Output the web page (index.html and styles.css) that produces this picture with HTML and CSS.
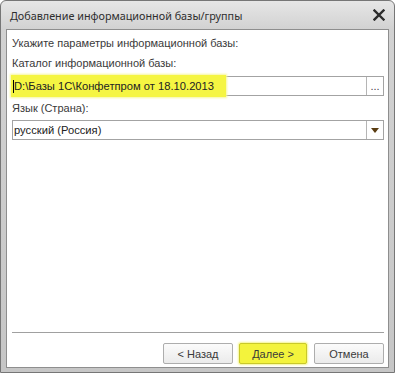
FILE: index.html
```html
<!DOCTYPE html>
<html>
<head>
<meta charset="utf-8">
<link rel="stylesheet" href="styles.css">
<title>Добавление информационной базы/группы</title>
</head>
<body>
  <div class="okno">
    <div class="zagolovok">
      <span class="zagolovok-text">Добавление информационной базы/группы</span>
      <span class="zakryt">
        <svg width="12" height="12" viewBox="0 0 12 12">
          <path d="M1.5 1.5 L10.5 10.5 M10.5 1.5 L1.5 10.5" stroke="#2b2b2b" stroke-width="2.4" stroke-linecap="square"/>
        </svg>
      </span>
    </div>
    <div class="klient">
      <div class="stroka">Укажите параметры информационной базы:</div>
      <div class="stroka metka">Каталог информационной базы:</div>
      <div class="pole">
        <div class="pole-text">
          <span class="podsvetka"><span class="kursor"></span>D:\Базы 1С\Конфетпром от 18.10.2013</span>
        </div>
        <div class="pole-knopka">...</div>
      </div>
      <div class="stroka metka-2">Язык (Страна):</div>
      <div class="pole pole-spisok">
        <div class="pole-text">русский (Россия)</div>
        <div class="pole-knopka">
          <svg width="8" height="5" viewBox="0 0 8 5"><path d="M0 0 L8 0 L4 5 Z" fill="#5a3d12"/></svg>
        </div>
      </div>
      <div class="razdelitel"></div>
      <div class="knopki">
        <button class="knopka">&lt; Назад</button>
        <button class="knopka knopka-dalee">Далее &gt;</button>
        <button class="knopka">Отмена</button>
      </div>
    </div>
  </div>
</body>
</html>
```

FILE: styles.css
```css
body {
  margin: 0;
  background-color: #ffffff;
  font-family: "Liberation Sans", Arial, sans-serif;
}

.okno {
  width: 395px;
  height: 373px;
  box-sizing: border-box;
  border: 1px solid #767676;
  border-radius: 6px 6px 0 0;
  background: linear-gradient(to bottom, #e6e6e6 0px, #d2d2d2 28px, #c6c6c6 100%);
  display: flex;
  flex-direction: column;
}

.zagolovok {
  height: 28px;
  display: flex;
  align-items: center;
  padding: 0 9px 0 9px;
}

.zagolovok-text {
  flex: 1;
  font-family: "Noto Sans", sans-serif;
  font-size: 10.8px;
  color: #2e2e2e;
}

.zakryt {
  display: flex;
}

.klient {
  flex: 1;
  margin: 0 5px 4px 5px;
  border: 1px solid #8e8e8e;
  background-color: #ffffff;
  padding: 6px 4px 0 5px;
  display: flex;
  flex-direction: column;
  font-size: 11px;
  color: #3a3a3a;
}

.stroka {
  line-height: 14px;
}

.metka {
  margin-top: 6px;
}

.metka-2 {
  margin-top: 5px;
}

.pole {
  margin-top: 6px;
  height: 20px;
  box-sizing: border-box;
  border: 1px solid #a3a3a3;
  display: flex;
}

.pole-spisok {
  margin-top: 5px;
}

.pole-text {
  flex: 1;
  display: flex;
  align-items: center;
  padding-left: 1px;
  font-size: 11.2px;
  color: #222222;
}

.podsvetka {
  display: flex;
  align-items: center;
  height: 22px;
  margin-left: -3px;
  padding: 0 12px 0 2px;
  background-color: #f5f542;
  box-shadow: 0 0 2px 1px #f7f79a;
}

.kursor {
  width: 1px;
  height: 13px;
  background-color: #000000;
}

.pole-knopka {
  width: 16px;
  border-left: 1px solid #b5b5b5;
  display: flex;
  align-items: center;
  justify-content: center;
  font-size: 11px;
  color: #444444;
  background-color: #ffffff;
}

.razdelitel {
  margin-top: auto;
  height: 1px;
  background-color: #a0a0a0;
}

.knopki {
  display: flex;
  justify-content: flex-end;
  margin-top: 10px;
  margin-bottom: 3px;
}

.knopka {
  width: 70px;
  height: 21px;
  border: 1px solid #adadad;
  border-radius: 2px;
  background: linear-gradient(to bottom, #fbfbfb, #ebebeb);
  font-family: "Liberation Sans", Arial, sans-serif;
  font-size: 11px;
  color: #3a3a3a;
  padding: 0;
}

.knopka-dalee {
  width: 68px;
  margin: 0 7px 0 6px;
  background: #f3f33c;
  border: 1px solid #c9c92a;
  box-shadow: 0 0 2px 1px #f6f690;
}
```
